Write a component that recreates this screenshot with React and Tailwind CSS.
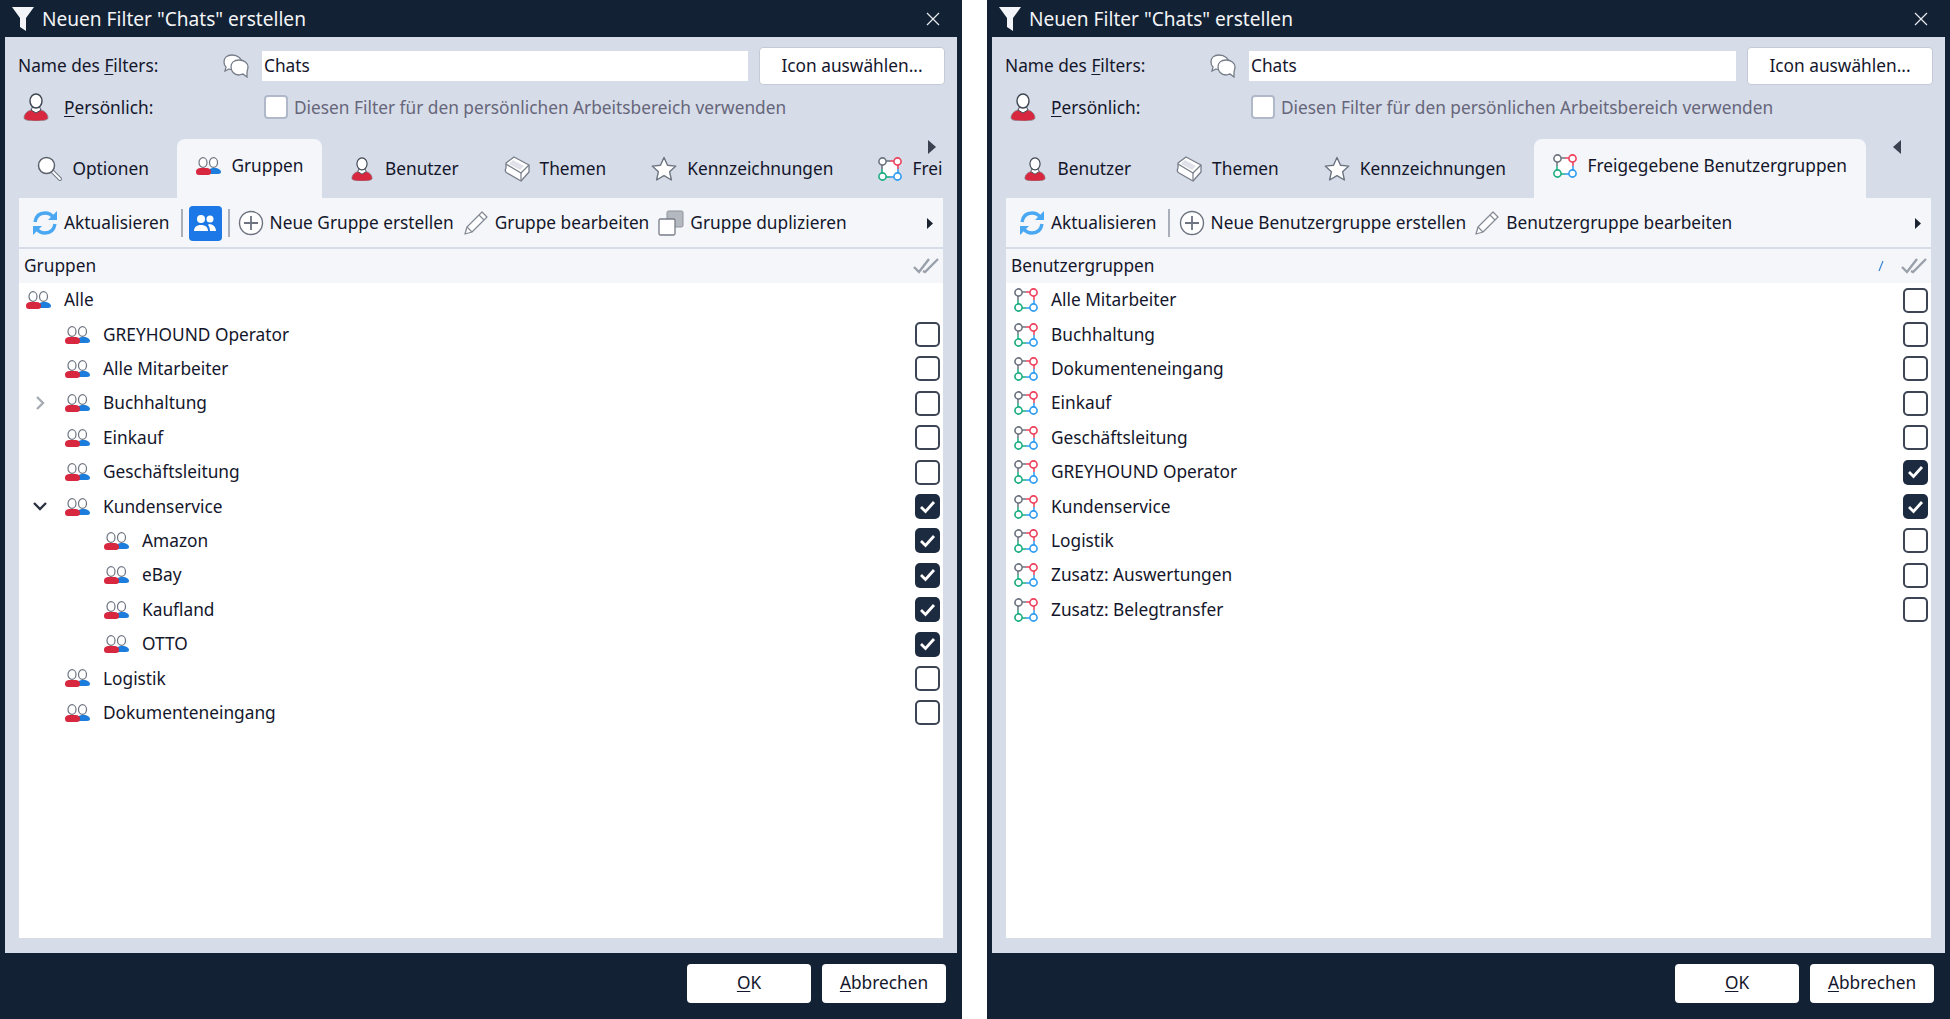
import React from "react";

const ink = "#3f4652";

function PersonIcon({ size = 26 }) {
    return (
        <svg width={size} height={size + 2} viewBox="0 0 26 28" preserveAspectRatio="none" className="shrink-0">
            <path d="M1 25c0-4 3-7 7-8l5 2 5-2c4 1 7 4 7 8 0 2-5 3-12 3S1 27 1 25z" fill="#d8283f" stroke="#8c8f96" strokeWidth="0.8" />
            <path d="M8 17l5 3 5-3-2-4h-6z" fill="#fff" stroke={ink} strokeWidth="1" />
            <ellipse cx="13" cy="8" rx="6" ry="7" fill="#fff" stroke={ink} strokeWidth="1.4" />
        </svg>
    );
}

function GroupIcon() {
    return (
        <svg width="25" height="18" viewBox="0 0 25 18" className="shrink-0">
            <ellipse cx="17.5" cy="5.5" rx="4" ry="4.8" fill="#fff" stroke="#6d7480" strokeWidth="1.2" />
            <path d="M13 17v-3c0-2 2-3 4-3h2c3 0 6 2 6 4 0 1-1 2-3 2z" fill="#1c7ddc" />
            <ellipse cx="7" cy="5.5" rx="4" ry="4.8" fill="#fff" stroke="#6d7480" strokeWidth="1.2" />
            <path d="M0 15c0-3 2-4 5-4h5c3 0 5 1 5 4 0 2-1 3-3 3H3c-2 0-3-1-3-3z" fill="#d8283f" />
        </svg>
    );
}

function SharedIcon({ filled }) {
    return (
        <svg width="24" height="24" viewBox="0 0 24 24" className="shrink-0">
            {filled && <rect x="5" y="5" width="14" height="14" fill="#fff" />}
            <path d="M8 4h4" stroke="#6d7480" strokeWidth="1.5" />
            <path d="M12 4h4" stroke="#ee3f5a" strokeWidth="1.5" />
            <path d="M4 8v4" stroke="#6d7480" strokeWidth="1.5" />
            <path d="M4 12v4" stroke="#19ad80" strokeWidth="1.5" />
            <path d="M8 20h4" stroke="#19ad80" strokeWidth="1.5" />
            <path d="M12 20h4" stroke="#2d9bf0" strokeWidth="1.5" />
            <path d="M20 8v4" stroke="#ee3f5a" strokeWidth="1.5" />
            <path d="M20 12v4" stroke="#2d9bf0" strokeWidth="1.5" />
            <circle cx="4.5" cy="4.5" r="3.6" fill="#fff" stroke="#6d7480" strokeWidth="1.6" />
            <circle cx="19.5" cy="4.5" r="3.6" fill="#fff" stroke="#ee3f5a" strokeWidth="1.6" />
            <circle cx="4.5" cy="19.5" r="3.6" fill="#fff" stroke="#19ad80" strokeWidth="1.6" />
            <circle cx="19.5" cy="19.5" r="3.6" fill="#fff" stroke="#2d9bf0" strokeWidth="1.6" />
        </svg>
    );
}

function SearchIcon() {
    return (
        <svg width="26" height="26" viewBox="0 0 26 26" className="shrink-0">
            <path d="M15 15l8 8" stroke="#777d88" strokeWidth="4" strokeLinecap="round" />
            <path d="M15 15l8 8" stroke="#fff" strokeWidth="1.8" strokeLinecap="round" />
            <circle cx="9.5" cy="9.5" r="8" fill="#fff" stroke="#5b616c" strokeWidth="1.5" />
        </svg>
    );
}

function BookIcon() {
    return (
        <svg width="26" height="26" viewBox="0 0 26 26" className="shrink-0">
            <path d="M2 7l8-6 15 8v7l-8 9-14-8c-2-1-2-3-1-5z" fill="#fff" stroke="#777d88" strokeWidth="1.3" strokeLinejoin="round" />
            <path d="M2 8l15 9 8-8" fill="none" stroke="#777d88" strokeWidth="1.3" />
            <path d="M17 17v8" stroke="#777d88" strokeWidth="1.2" />
            <path d="M9 4l11 6-4 4L5 8z" fill="#dfe2e8" />
        </svg>
    );
}

function StarIcon() {
    return (
        <svg width="26" height="26" viewBox="0 0 26 26" className="shrink-0">
            <path d="M13 1.5l3.5 7.7 8.3.9-6.2 5.6 1.8 8.3-7.4-4.3-7.4 4.3 1.8-8.3-6.2-5.6 8.3-.9z" fill="#fff" stroke="#6d7480" strokeWidth="1.4" strokeLinejoin="round" />
        </svg>
    );
}

function RefreshIcon() {
    return (
        <svg width="26" height="26" viewBox="0 0 26 26" className="shrink-0">
            <path d="M3 12C4 6 8 3 13 3c3 0 6 1 8 4" fill="none" stroke="#4aa8f2" strokeWidth="3.4" />
            <path d="M25 1v9h-9z" fill="#4aa8f2" />
            <path d="M23 14c-1 6-5 9-10 9-3 0-6-1-8-4" fill="none" stroke="#4aa8f2" strokeWidth="3.4" />
            <path d="M1 25v-9h9z" fill="#4aa8f2" />
        </svg>
    );
}

function PlusIcon() {
    return (
        <svg width="26" height="26" viewBox="0 0 26 26" className="shrink-0">
            <circle cx="13" cy="13" r="11.5" fill="#fff" stroke="#6d7480" strokeWidth="1.4" />
            <path d="M13 6v14M6 13h14" stroke="#6d7480" strokeWidth="1.8" />
        </svg>
    );
}

function PencilIcon() {
    return (
        <svg width="26" height="26" viewBox="0 0 26 26" className="shrink-0">
            <path d="M19 2l5 5L9 22l-7 2 2-7z" fill="#fff" stroke="#858b95" strokeWidth="1.3" strokeLinejoin="round" />
            <path d="M16 5l5 5M4 17l5 5" stroke="#858b95" strokeWidth="1.2" />
        </svg>
    );
}

function DuplicateIcon() {
    return (
        <svg width="26" height="26" viewBox="0 0 26 26" className="shrink-0">
            <rect x="9" y="1" width="16" height="16" rx="1.5" fill="#b4b8bf" stroke="#8e939c" strokeWidth="1" />
            <rect x="1" y="9" width="16" height="16" rx="1.5" fill="#fff" stroke="#777d88" strokeWidth="1.3" />
        </svg>
    );
}

function ChatIcon() {
    return (
        <svg width="26" height="24" viewBox="0 0 26 24" className="shrink-0">
            <path d="M9 1C4 1 1 4 1 8c0 2 1 4 2 5l-1 4 4-2c2 1 3 1 5 1 5 0 8-3 8-7s-4-8-10-8z" fill="#fff" stroke="#777d88" strokeWidth="1.3" />
            <path d="M16 6c5 0 9 3 9 7 0 2-1 4-1 5v5l-4-3c-1 0-3 1-4 1-5 0-8-4-8-8s3-7 8-7z" fill="#fff" stroke="#777d88" strokeWidth="1.3" />
        </svg>
    );
}

function FunnelIcon() {
    return (
        <svg width="22" height="24" viewBox="0 0 22 24" className="shrink-0">
            <path d="M0 0h22l-8 11v13l-6-4v-9z" fill="#f2f4f7" />
        </svg>
    );
}

function CheckAllIcon() {
    return (
        <svg width="26" height="18" viewBox="0 0 26 18" className="shrink-0">
            <path d="M1 10l5 5L16 2" fill="none" stroke="#9aa0aa" strokeWidth="2.4" />
            <path d="M10 14l2 1L25 2" fill="none" stroke="#9aa0aa" strokeWidth="2.4" />
        </svg>
    );
}

function Arrow({ dir = "right", tone = "#1c2330", small }) {
    return (
        <svg width={small ? 6 : 8} height={small ? 11 : 14} viewBox="0 0 8 14" preserveAspectRatio="none" className="shrink-0">
            <path d={dir === "right" ? "M0 0l8 7-8 7z" : "M8 0L0 7l8 7z"} fill={tone} />
        </svg>
    );
}

function Checkbox({ checked }) {
    if (checked) {
        return (
            <div className="w-[25px] h-[25px] rounded-[5px] bg-[#1d2b40] flex items-center justify-center shrink-0">
                <svg width="17" height="14" viewBox="0 0 17 14">
                    <path d="M2 7l4.5 4.5L15 2" fill="none" stroke="#fff" strokeWidth="2.8" />
                </svg>
            </div>
        );
    }
    return <div className="w-[25px] h-[25px] rounded-[5px] border-2 border-[#3d4555] bg-white shrink-0" />;
}

function Separator() {
    return <div className="w-[2px] h-[28px] bg-[#a9afb9] shrink-0" />;
}

function Tabs({ items }) {
    return (
        <div className="flex h-[59px] mt-[10px] pl-[9px] items-end overflow-hidden mr-[12px] whitespace-nowrap">
            {items.map((tab) =>
                tab.active ? (
                    <div key={tab.label} className="h-[59px] mx-[6px] px-[19px] pb-[6px] flex items-center gap-[10px] shrink-0 rounded-t-[8px] bg-[#f4f6fa]">
                        {tab.icon}
                        <span>{tab.label}</span>
                    </div>
                ) : (
                    <div key={tab.label} className="h-[59px] px-[22.5px] flex items-center gap-[10px] shrink-0">
                        {tab.icon}
                        <span>{tab.label}</span>
                    </div>
                )
            )}
        </div>
    );
}

function TreeRow({ label, level = 0, expand, checked, noBox }) {
    const indent = level === 0 ? "pl-[7px]" : level === 1 ? "pl-[46px]" : "pl-[85px]";
    return (
        <div className={`relative flex items-center h-[34.4px] pr-[3px] ${indent}`}>
            {expand === "closed" && (
                <svg width="10" height="16" viewBox="0 0 10 16" className="absolute left-[16px] top-[9px]">
                    <path d="M2 2l6 6-6 6" fill="none" stroke="#a6abb4" strokeWidth="2.4" />
                </svg>
            )}
            {expand === "open" && (
                <svg width="16" height="10" viewBox="0 0 16 10" className="absolute left-[13px] top-[12px]">
                    <path d="M2 2l6 6 6-6" fill="none" stroke="#2b3240" strokeWidth="2.4" />
                </svg>
            )}
            <GroupIcon />
            <span className="ml-[13px] flex-1">{label}</span>
            {!noBox && <Checkbox checked={checked} />}
        </div>
    );
}

function SharedRow({ label, checked }) {
    return (
        <div className="flex items-center h-[34.4px] pl-[8px] pr-[3px]">
            <SharedIcon />
            <span className="ml-[13px] flex-1">{label}</span>
            <Checkbox checked={checked} />
        </div>
    );
}

function FilterWindow({ width, tabs, tabArrow, toolbar, header, headerExtra, children }) {
    return (
        <div className={`flex flex-col h-[1019px] bg-[#122133] shrink-0 ${width}`}>
            <div className="h-[37px] flex items-center pl-[12px] pr-[22px] text-[#f2f4f7] shrink-0">
                <FunnelIcon />
                <span className="ml-[8px] pt-[1px] text-[19.1px]">Neuen Filter "Chats" erstellen</span>
                <svg width="14" height="14" viewBox="0 0 14 14" className="ml-auto">
                    <path d="M1 1l12 12M13 1L1 13" stroke="#e8ebf0" strokeWidth="1.2" />
                </svg>
            </div>

            <div className="relative flex flex-col h-[916px] mx-[5px] bg-[#d6dce8]">
                <div className="flex items-center mt-[10px] pl-[13px] pr-[12px] h-[38px]">
                    <span className="w-[205px] pb-[1px]">Name des <u className="underline-offset-2">F</u>ilters:</span>
                    <ChatIcon />
                    <input readOnly value="Chats" className="ml-[13px] flex-1 min-w-0 h-[30px] bg-white px-[2px] pb-[2px] outline-none" />
                    <button className="ml-[11px] w-[186px] h-[38px] pb-[1px] rounded-[4px] bg-white border border-[#c3cad8]">Icon auswählen...</button>
                </div>

                <div className="flex items-center h-[44px] pl-[18px]">
                    <PersonIcon />
                    <span className="ml-[15px] w-[200px] pt-[1px]"><u className="underline-offset-2">P</u>ersönlich:</span>
                    <div className="w-[24px] h-[24px] rounded-[4px] border-2 border-[#b0b9ca] bg-white shrink-0" />
                    <span className="ml-[6px] pt-[1px] text-[#66667a]">Diesen Filter für den persönlichen Arbeitsbereich verwenden</span>
                </div>

                <Tabs items={tabs} />
                {tabArrow}

                <div className="flex flex-col flex-1 mx-[14px] mb-[15px] bg-white min-h-0">
                    <div className="flex items-center h-[51px] pt-[1px] pl-[13px] pr-[10px] bg-[#f4f6fa] border-b-2 border-[#d6dce8] shrink-0 whitespace-nowrap">
                        {toolbar}
                    </div>
                    <div className="flex items-center h-[34px] pl-[5px] pr-[4px] bg-[#f4f6fa] shrink-0">
                        <span className="flex-1">{header}</span>
                        {headerExtra}
                        <CheckAllIcon />
                    </div>
                    <div className="flex-1">{children}</div>
                </div>
            </div>

            <div className="flex justify-end items-start pt-[11px] pr-[16px] gap-[11px]">
                <button className="w-[124px] h-[39px] pb-[1px] rounded-[4px] bg-white"><u className="underline-offset-2">O</u>K</button>
                <button className="w-[124px] h-[39px] pb-[1px] rounded-[4px] bg-white"><u className="underline-offset-2">A</u>bbrechen</button>
            </div>
        </div>
    );
}

function ToolItem({ icon, label, className = "" }) {
    return (
        <div className={`flex items-center gap-[6px] shrink-0 ${className}`}>
            {icon}
            <span>{label}</span>
        </div>
    );
}

const tabPerson = (
    <span className="mr-[2px] shrink-0 flex">
        <PersonIcon size={22} />
    </span>
);

const leftTabs = [
    { label: "Optionen", icon: <SearchIcon /> },
    { label: "Gruppen", icon: <GroupIcon />, active: true },
    { label: "Benutzer", icon: tabPerson },
    { label: "Themen", icon: <BookIcon /> },
    { label: "Kennzeichnungen", icon: <StarIcon /> },
    { label: "Frei", icon: <SharedIcon filled /> },
];

const rightTabs = [
    { label: "Benutzer", icon: tabPerson },
    { label: "Themen", icon: <BookIcon /> },
    { label: "Kennzeichnungen", icon: <StarIcon /> },
    { label: "Freigegebene Benutzergruppen", icon: <SharedIcon filled />, active: true },
];

const groups = [
    { label: "GREYHOUND Operator", level: 1 },
    { label: "Alle Mitarbeiter", level: 1 },
    { label: "Buchhaltung", level: 1, expand: "closed" },
    { label: "Einkauf", level: 1 },
    { label: "Geschäftsleitung", level: 1 },
    { label: "Kundenservice", level: 1, expand: "open", checked: true },
    { label: "Amazon", level: 2, checked: true },
    { label: "eBay", level: 2, checked: true },
    { label: "Kaufland", level: 2, checked: true },
    { label: "OTTO", level: 2, checked: true },
    { label: "Logistik", level: 1 },
    { label: "Dokumenteneingang", level: 1 },
];

const sharedGroups = [
    { label: "Alle Mitarbeiter" },
    { label: "Buchhaltung" },
    { label: "Dokumenteneingang" },
    { label: "Einkauf" },
    { label: "Geschäftsleitung" },
    { label: "GREYHOUND Operator", checked: true },
    { label: "Kundenservice", checked: true },
    { label: "Logistik" },
    { label: "Zusatz: Auswertungen" },
    { label: "Zusatz: Belegtransfer" },
];

export default function App() {
    return (
        <div className="flex justify-between w-[1950px] h-[1019px] overflow-hidden bg-white text-[#14162b] text-[17.3px] font-['Noto_Sans',sans-serif]">
            <FilterWindow
                width="w-[962px]"
                tabs={leftTabs}
                tabArrow={<div className="absolute right-[21px] top-[103px]"><Arrow tone="#3a4150" /></div>}
                header="Gruppen"
                toolbar={
                    <>
                        <ToolItem icon={<RefreshIcon />} label="Aktualisieren" />
                        <div className="ml-[11px]"><Separator /></div>
                        <div className="ml-[6px] w-[33px] h-[35px] rounded-[4px] bg-[#1c78e6] flex items-center justify-center shrink-0">
                            <svg width="24" height="18" viewBox="0 0 24 18">
                                <circle cx="8" cy="5" r="4" fill="#fff" />
                                <circle cx="17" cy="5" r="3.5" fill="#fff" />
                                <path d="M1 17c0-4 3-6 7-6s7 2 7 6zM16 10c4 0 7 3 7 7h-6c0-3-1-5-2-6z" fill="#fff" />
                            </svg>
                        </div>
                        <div className="ml-[6px]"><Separator /></div>
                        <ToolItem icon={<PlusIcon />} label="Neue Gruppe erstellen" className="ml-[8px]" />
                        <ToolItem icon={<PencilIcon />} label="Gruppe bearbeiten" className="ml-[9px]" />
                        <ToolItem icon={<DuplicateIcon />} label="Gruppe duplizieren" className="ml-[9px]" />
                        <div className="ml-auto"><Arrow small /></div>
                    </>
                }
            >
                <TreeRow label="Alle" noBox />
                {groups.map((g) => (
                    <TreeRow key={g.label} {...g} />
                ))}
            </FilterWindow>

            <FilterWindow
                width="w-[963px]"
                tabs={rightTabs}
                tabArrow={<div className="absolute left-[901px] top-[103px]"><Arrow dir="left" tone="#3a4150" /></div>}
                header="Benutzergruppen"
                headerExtra={
                    <svg width="8" height="14" viewBox="0 0 8 14" className="mr-[16px]">
                        <path d="M6 2L2 12" stroke="#3d84d8" strokeWidth="1.2" />
                    </svg>
                }
                toolbar={
                    <>
                        <ToolItem icon={<RefreshIcon />} label="Aktualisieren" />
                        <div className="ml-[11px]"><Separator /></div>
                        <ToolItem icon={<PlusIcon />} label="Neue Benutzergruppe erstellen" className="ml-[9px]" />
                        <ToolItem icon={<PencilIcon />} label="Benutzergruppe bearbeiten" className="ml-[8px]" />
                        <div className="ml-auto"><Arrow small /></div>
                    </>
                }
            >
                {sharedGroups.map((g) => (
                    <SharedRow key={g.label} {...g} />
                ))}
            </FilterWindow>
        </div>
    );
}
